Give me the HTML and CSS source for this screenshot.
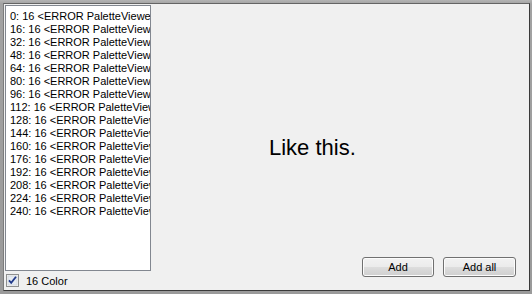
FILE: index.html
```html
<!DOCTYPE html>
<html>
<head>
<meta charset="utf-8">
<link rel="stylesheet" href="styles.css">
</head>
<body>
<div class="window">
  <div class="left">
    <div class="listbox">
      <div class="row">0: 16 &lt;ERROR PaletteViewer</div>
      <div class="row">16: 16 &lt;ERROR PaletteViewer</div>
      <div class="row">32: 16 &lt;ERROR PaletteViewer</div>
      <div class="row">48: 16 &lt;ERROR PaletteViewer</div>
      <div class="row">64: 16 &lt;ERROR PaletteViewer</div>
      <div class="row">80: 16 &lt;ERROR PaletteViewer</div>
      <div class="row">96: 16 &lt;ERROR PaletteViewer</div>
      <div class="row">112: 16 &lt;ERROR PaletteViewer</div>
      <div class="row">128: 16 &lt;ERROR PaletteViewer</div>
      <div class="row">144: 16 &lt;ERROR PaletteViewer</div>
      <div class="row">160: 16 &lt;ERROR PaletteViewer</div>
      <div class="row">176: 16 &lt;ERROR PaletteViewer</div>
      <div class="row">192: 16 &lt;ERROR PaletteViewer</div>
      <div class="row">208: 16 &lt;ERROR PaletteViewer</div>
      <div class="row">224: 16 &lt;ERROR PaletteViewer</div>
      <div class="row">240: 16 &lt;ERROR PaletteViewer</div>
    </div>
    <label class="check">
      <span class="box">
        <svg width="13" height="13" viewBox="0 0 13 13">
          <rect x="0.5" y="0.5" width="12" height="12" fill="#f4f4f4" stroke="#8e8f8f"/>
          <rect x="2" y="2" width="9" height="9" fill="#e6ebf2" stroke="#c8cdd4" stroke-width="0.6"/>
          <path d="M3 6.3 L5.2 8.8 L10 2.8" fill="none" stroke="#21398a" stroke-width="1.8"/>
        </svg>
      </span>
      <span class="check-text">16 Color</span>
    </label>
  </div>
  <div class="right">
    <div class="preview"><span class="big">Like this.</span></div>
    <div class="buttons">
      <button class="btn btn-add">Add</button>
      <button class="btn btn-all">Add all</button>
    </div>
  </div>
</div>
</body>
</html>
```

FILE: styles.css
```css
html, body {
  margin: 0;
  padding: 0;
}
body {
  width: 532px;
  height: 294px;
  overflow: hidden;
  background: linear-gradient(180deg, #b4b4b4 0px, #a2a2a2 4px, #9a9a9a 100%);
  font-family: "Liberation Sans", Arial, sans-serif;
}
.window {
  margin: 3px 2px 3px 3px;
  height: 286px;
  border: 1px solid;
  border-color: #646464 #3a3a3a #3a3a3a #7c7c7c;
  background: #f0f0f0;
  display: flex;
}
.left {
  width: 147px;
  display: flex;
  flex-direction: column;
}
.listbox {
  margin: 1px 0 0 1px;
  width: 144px;
  height: 264px;
  border: 1px solid #828790;
  background: #ffffff;
  padding: 4px 0 0 4px;
  box-sizing: content-box;
  width: 140px;
  height: 260px;
  overflow: hidden;
}
.row {
  font-size: 11px;
  line-height: 13px;
  white-space: nowrap;
  color: #000;
}
.check {
  display: flex;
  align-items: center;
  margin: 3px 0 0 2px;
  height: 13px;
}
.box {
  width: 13px;
  height: 13px;
  display: block;
}
.box svg {
  display: block;
}
.check-text {
  margin-left: 7px;
  font-size: 11px;
  color: #000;
}
.right {
  flex: 1;
  display: flex;
  flex-direction: column;
}
.preview {
  flex: 1;
  padding: 131px 0 0 118px;
}
.big {
  font-size: 22px;
  color: #000;
}
.buttons {
  display: flex;
  justify-content: flex-end;
  gap: 9px;
  padding: 0 13px 13px 0;
}
.btn {
  height: 20px;
  border: 1px solid #707070;
  border-radius: 3px;
  background: linear-gradient(180deg, #f2f2f2 0%, #ebebeb 50%, #dddddd 51%, #cfcfcf 100%);
  box-shadow: inset 0 0 0 1px #fcfcfc;
  font-family: "Liberation Sans", Arial, sans-serif;
  font-size: 11px;
  color: #000;
  padding: 0;
}
.btn-add {
  width: 72px;
}
.btn-all {
  width: 73px;
}
```
